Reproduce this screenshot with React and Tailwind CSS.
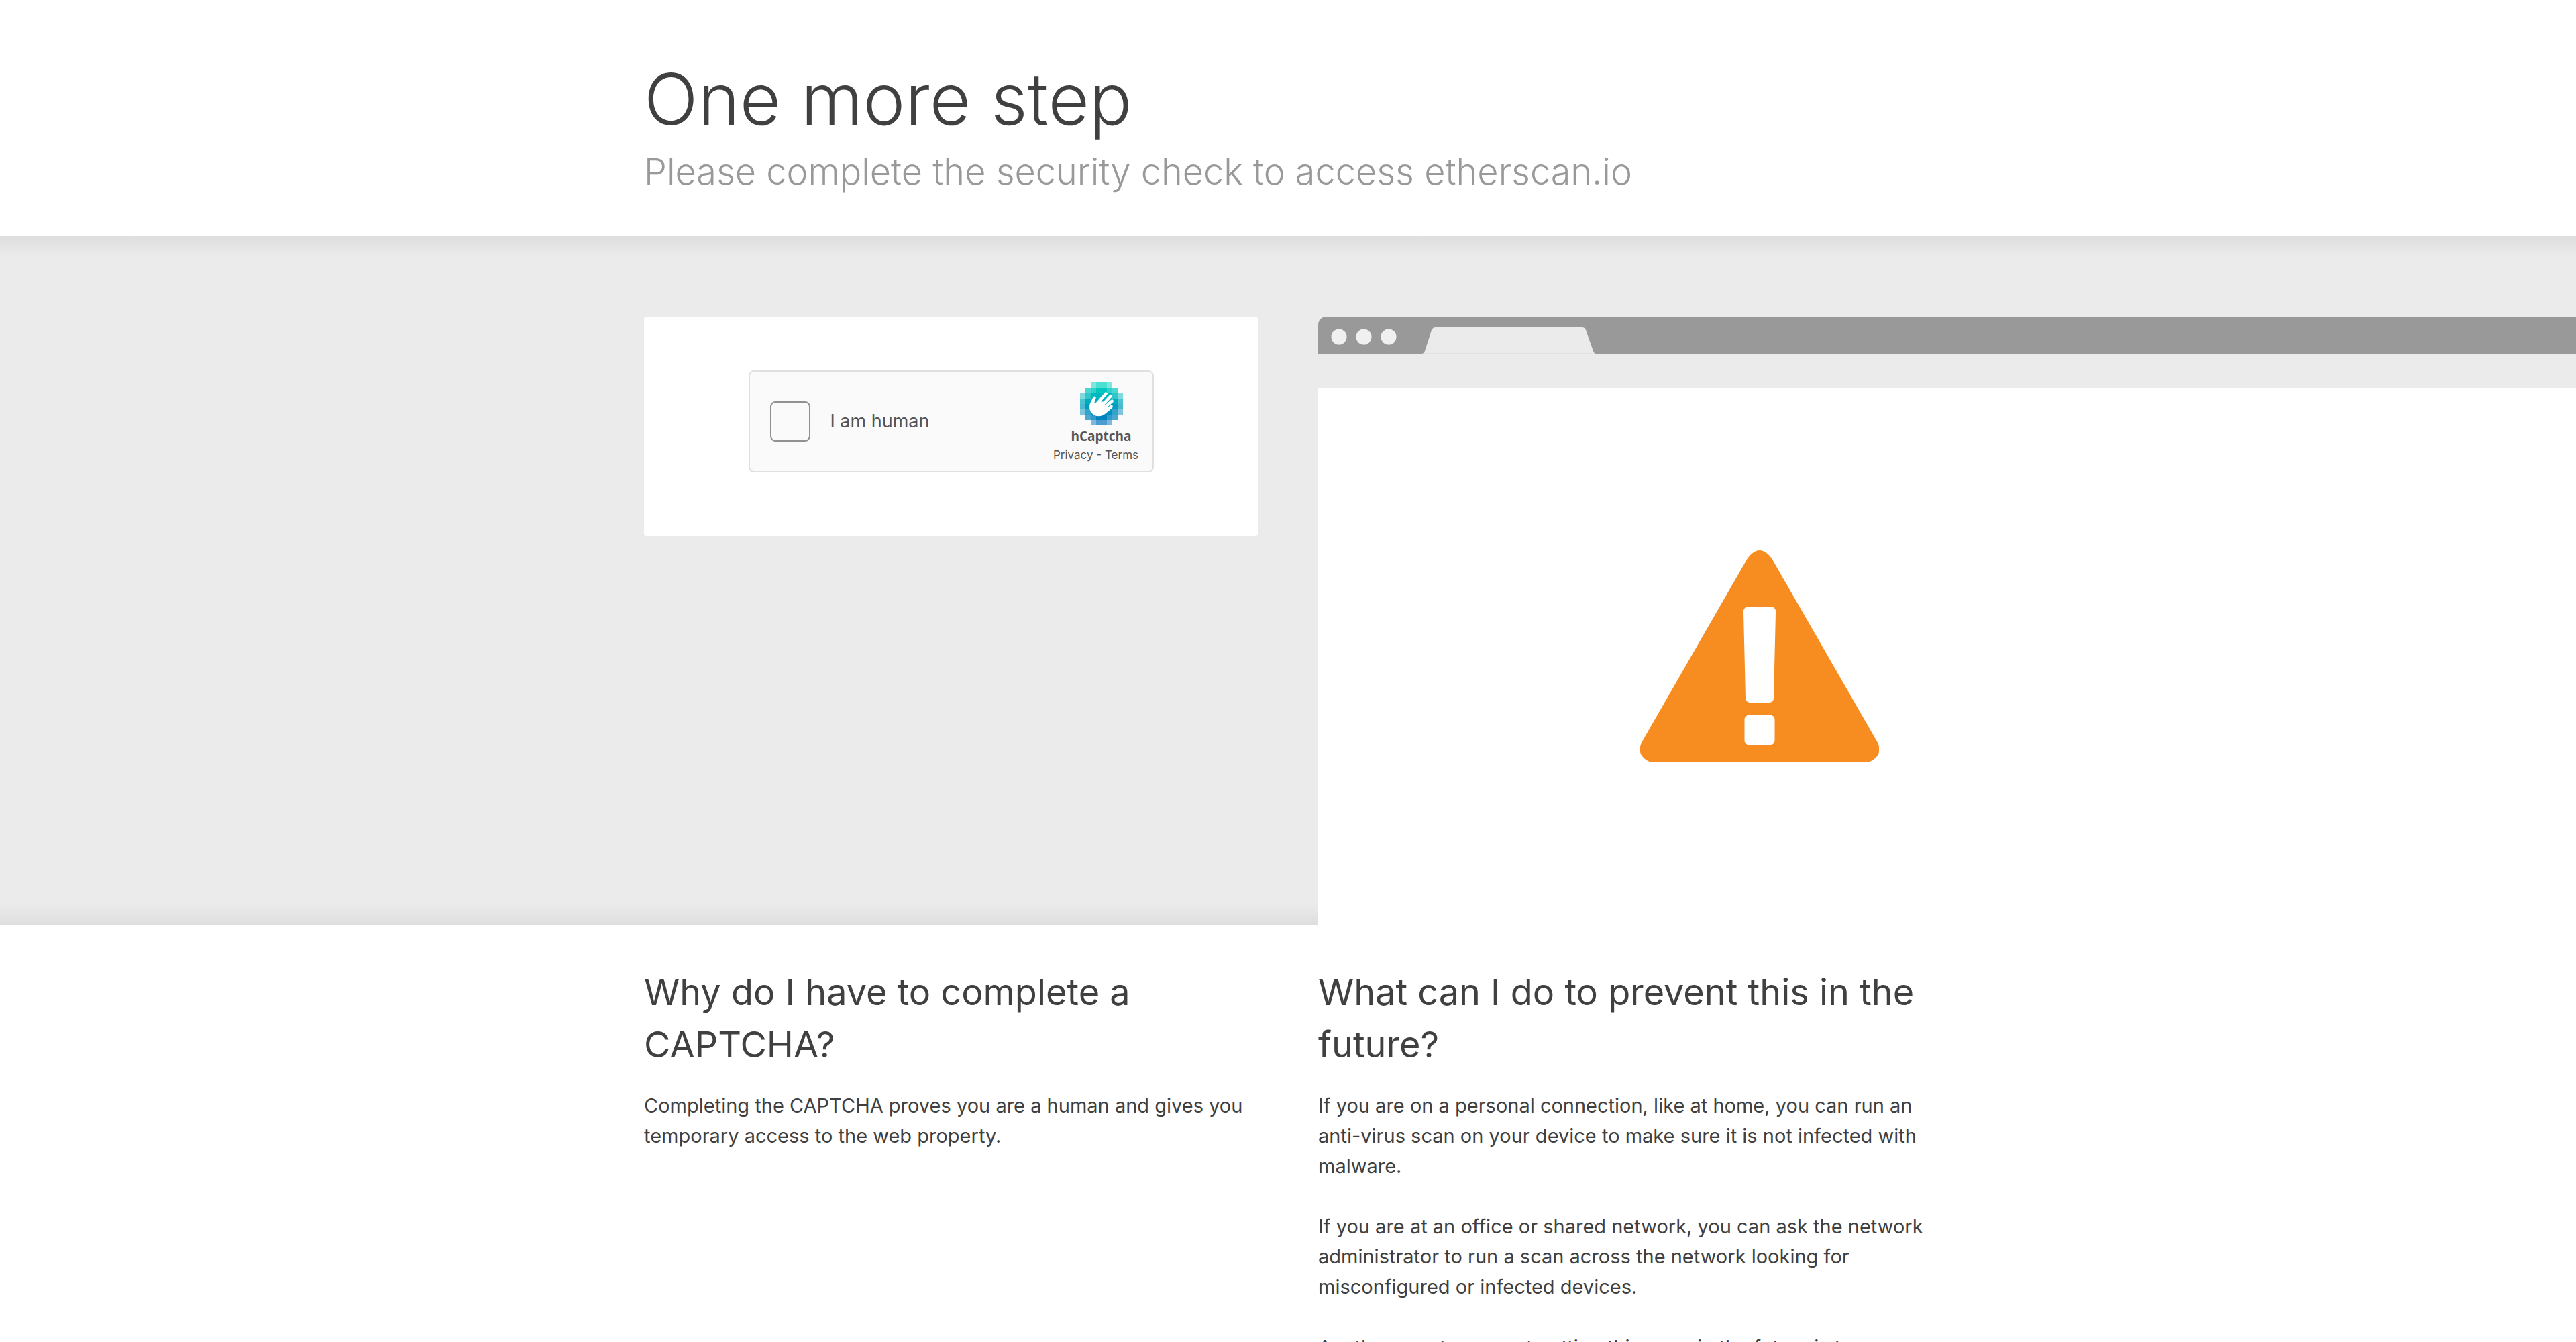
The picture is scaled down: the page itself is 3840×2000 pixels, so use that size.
const LOGO_ROWS = [
  { color: "#00d4bf", alphas: [0, 0, 0.5, 0.7, 0.7, 0.5, 0, 0] },
  { color: "#00c6bf", alphas: [0, 0.7, 0.8, 1, 1, 0.8, 0.7, 0] },
  { color: "#00b9bf", alphas: [0.5, 0.8, 1, 1, 1, 1, 0.8, 0.5] },
  { color: "#00abbf", alphas: [0.7, 1, 1, 1, 1, 1, 1, 0.7] },
  { color: "#009dbf", alphas: [0.7, 1, 1, 1, 1, 1, 1, 0.7] },
  { color: "#008fbf", alphas: [0.5, 0.8, 1, 1, 1, 1, 0.8, 0.5] },
  { color: "#0082bf", alphas: [0, 0.7, 0.8, 1, 1, 0.8, 0.7, 0] },
  { color: "#0074bf", alphas: [0, 0, 0.5, 0.7, 0.7, 0.5, 0, 0] },
];

const PREVENTION = [
  "If you are on a personal connection, like at home, you can run an anti-virus scan on your device to make sure it is not infected with malware.",
  "If you are at an office or shared network, you can ask the network administrator to run a scan across the network looking for misconfigured or infected devices.",
  "Another way to prevent getting this page in the future is to use Privacy Pass. You may need to download version 2.0 now from the Chrome Web Store.",
];

const PAGE_GRID = "grid grid-cols-[1fr_915px_915px_1fr] gap-x-[90px]";

function HCaptchaLogo() {
  return (
    <svg viewBox="0 0 32 32" className="size-16" aria-hidden="true">
      <g shapeRendering="crispEdges">
        {LOGO_ROWS.map((row, y) =>
          row.alphas.map((alpha, x) =>
            alpha ? (
              <rect key={`${x}-${y}`} x={x * 4} y={y * 4} width="4" height="4" fill={row.color} opacity={alpha} />
            ) : null
          )
        )}
      </g>
      <g stroke="#fff" strokeWidth="2.3" strokeLinecap="round" strokeLinejoin="round" fill="none">
        <path d="M10.7 11.5 9 15.6" />
        <path d="M19.3 8.3 12.5 16" />
        <path d="M22.8 10.1 15 18.5" />
        <path d="M23.8 13.9 16 20.5" />
        <path d="M23.3 18 17 22.8" />
      </g>
      <path
        fill="#fff"
        d="M9.6 11.6 7.9 14.7C7.2 16 7 17 7 18.2 7 22 10.1 25.1 13.9 25.1 15.8 25.1 17.4 24.6 18.7 23.4L24 19 20.4 18.6 19.8 18 20 17.2 18 16.5 17.6 15.5 17.8 14.4 15.8 14.1 11.2 15.3 10.6 14.8 11.8 11.9Z"
      />
    </svg>
  );
}

function WarningIcon() {
  return (
    <svg viewBox="0 0 356 316" className="h-[316px] w-[356px]" role="img" aria-label="Warning">
      <path
        fill="#f78d20"
        d="M160 12C172-4 184-4 196 12L353 285C357 292 358 301 353 307C349 312 344 315 338 316H18C12 315 7 312 3 307C-2 301-1 292 3 285Z"
      />
      <path
        fill="#fff"
        d="M162 84H194Q202 84 202 92L199 220Q199 227 192 227H164Q157 227 157 220L154 92Q154 84 162 84Z"
      />
      <rect x="155.500" y="245.500" width="45" height="45" rx="7" fill="#fff" />
    </svg>
  );
}

function CaptchaWidget() {
  return (
    <div className="flex h-[152px] w-[604px] items-center justify-between rounded-lg border-2 border-[#e0e0e0] bg-[#fafafa] pl-[30px]">
      <label className="flex items-center gap-[30px] text-[27px] leading-8 text-[#555]">
        <input
          type="checkbox"
          className="size-[60px] appearance-none rounded-lg border-2 border-[#919191] bg-[#fafafa]"
        />
        I am human
      </label>
      <div className="flex w-[152px] flex-col items-center self-start pt-4">
        <HCaptchaLogo />
        <span className="mt-1 font-['Open_Sans',sans-serif] text-[19px] leading-6 font-bold text-[#555]">hCaptcha</span>
        <span className="mt-1 pr-4 text-[17px] leading-6 whitespace-nowrap text-[#555]">
          <a href="#privacy">Privacy</a> - <a href="#terms">Terms</a>
        </span>
      </div>
    </div>
  );
}

function BrowserWindow() {
  return (
    <div className="col-span-2 mt-[120px] flex flex-col">
      <div className="h-[55px] rounded-tl-xl bg-[#999]">
        <svg viewBox="0 0 420 55" className="h-[55px] w-[420px]" aria-hidden="true">
          <g fill="#f0f0f0">
            <circle cx="31" cy="30" r="11.500" />
            <circle cx="68" cy="30" r="11.500" />
            <circle cx="105" cy="30" r="11.500" />
          </g>
          <path fill="#ebebeb" d="M155 55Q158 54 159 51L169 20Q171 16 175 16H393Q398 16 399 20L410 51Q411 54 413 55Z" />
          <path stroke="#e2e2e2" d="M158 54.500H410" />
        </svg>
      </div>
      <div className="h-[51px] bg-[#ebebeb]" />
      <div className="flex h-[800px] bg-white pt-[242px] pl-[480px]">
        <WarningIcon />
      </div>
    </div>
  );
}

function Question({ title, paragraphs }) {
  return (
    <section>
      <h2 className="text-[54px] leading-[78px]">{title}</h2>
      <div className="mt-[29px] flex flex-col gap-[45px] text-[29px] leading-[45px]">
        {paragraphs.map((text) => (
          <p key={text}>{text}</p>
        ))}
      </div>
    </section>
  );
}

export default function App() {
  return (
    <div className="h-screen overflow-hidden bg-white font-['Inter',sans-serif] text-[#404040]">
      <header className={`${PAGE_GRID} pt-[78px] pb-[58px]`}>
        <div className="col-span-2 col-start-2">
          <h1 className="text-[106px] leading-[140px] font-light">One more step</h1>
          <p className="text-[54px] leading-[76px] font-light text-[#999]">
            Please complete the security check to access etherscan.io
          </p>
        </div>
      </header>
      <main>
        <div className={`${PAGE_GRID} bg-[linear-gradient(to_bottom,#dedede,#ebebeb_3%,#ebebeb_97%,#dedede)]`}>
          <div className="col-start-2 mt-[120px] flex justify-center self-start rounded-sm bg-white pt-20 pb-[95px]">
            <CaptchaWidget />
          </div>
          <BrowserWindow />
        </div>
        <div className={`${PAGE_GRID} pt-[62px]`}>
          <div className="col-start-2">
            <Question
              title="Why do I have to complete a CAPTCHA?"
              paragraphs={[
                "Completing the CAPTCHA proves you are a human and gives you temporary access to the web property.",
              ]}
            />
          </div>
          <Question title="What can I do to prevent this in the future?" paragraphs={PREVENTION} />
        </div>
      </main>
    </div>
  );
}
